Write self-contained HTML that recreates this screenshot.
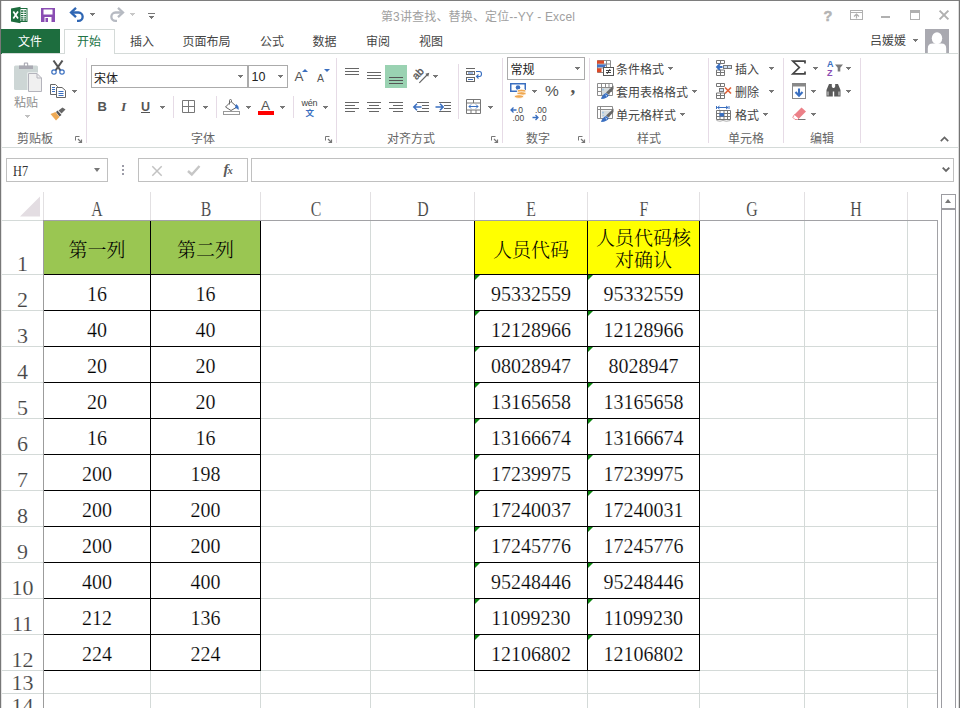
<!DOCTYPE html>
<html lang="zh-CN"><head><meta charset="utf-8"><title>Excel</title>
<style>
*{box-sizing:border-box;margin:0;padding:0}
html,body{width:960px;height:708px;overflow:hidden;background:#fff}
body{position:relative;font-family:"Liberation Sans","Noto Sans CJK SC",sans-serif;font-size:12px;color:#444}
.a{position:absolute}
.t{position:absolute;white-space:nowrap;line-height:16px;height:16px}
.tab{position:absolute;top:34px;height:16px;line-height:16px;font-size:12px;color:#444;white-space:nowrap;transform:translateX(-50%)}
.gl{position:absolute;top:131px;height:16px;line-height:16px;font-size:12px;color:#666;white-space:nowrap;transform:translateX(-50%)}
.gs{position:absolute;top:58px;width:1px;height:85px;background:#e6dbe6}
.ss{position:absolute;width:1px;background:#e6dbe6}
.arr{position:absolute;width:0;height:0;border-left:2.800px solid transparent;border-right:2.800px solid transparent;border-top:3px solid #777;margin-left:.2px}
.rl{position:absolute;font-size:12px;color:#444;white-space:nowrap;line-height:16px;height:16px}
.vl{position:absolute;width:1px;background:#d4dad8}
.hl{position:absolute;height:1px;background:#d4dad8}
.bv{position:absolute;width:1px;background:#000}
.bh{position:absolute;height:1px;background:#000}
.ch{position:absolute;top:196px;height:26px;line-height:26px;font-family:"Liberation Serif","Noto Serif CJK SC",serif;font-size:22px;color:#444;-webkit-text-stroke:.15px #fff;text-align:center;transform:translateX(-50%) scaleX(.72);white-space:nowrap}
.rh{position:absolute;left:1px;width:43px;height:26px;line-height:26px;font-family:"Liberation Serif","Noto Serif CJK SC",serif;font-size:22px;color:#444;-webkit-text-stroke:.15px #fff;text-align:center;white-space:nowrap}
.c{position:absolute;text-align:center;font-family:"Liberation Serif","Noto Serif CJK SC",serif;font-size:20px;color:#000;white-space:nowrap;height:36px;line-height:36px;-webkit-text-stroke:.2px #fff}
.cj{position:absolute;text-align:center;font-family:"Liberation Serif","Noto Serif CJK SC",serif;font-size:19px;font-weight:300;color:#000;white-space:nowrap;line-height:23px}
.tri{position:absolute;width:0;height:0;border-top:5.500px solid #0b840f;border-right:5.500px solid transparent}
svg{position:absolute;overflow:visible}
</style></head>
<body>
<div class="a" style="left:0;top:0;width:960px;height:1px;background:#7e7e7e"></div>
<div class="a" style="left:0;top:0;width:1px;height:708px;background:#777"></div>
<div class="a" style="left:1px;top:1px;width:1px;height:707px;background:#e4e4e4"></div>
<div class="a" style="left:959px;top:0;width:1px;height:708px;background:#747474"></div>
<div class="a" style="left:958px;top:1px;width:1px;height:707px;background:#dcdcdc"></div>
<div class="t" style="left:0;width:956px;text-align:center;top:8.5px;color:#a0a0a0;font-size:12px;letter-spacing:.16px">第3讲查找、替换、定位--YY - Excel</div>
<svg style="left:10px;top:6px" width="18" height="18" viewBox="0 0 18 18">
<rect x="9" y="2.500" width="8" height="13" fill="#fff" stroke="#1d6d3e" stroke-width="1"/>
<path d="M11 5H16M11 7.300H16M11 9.600H16M11 11.900H16M11 14H16" stroke="#1d6d3e" stroke-width="1.300" fill="none"/>
<path d="M13.800 3V15" stroke="#fff" stroke-width=".8"/>
<path d="M1 2.500L10.500 .8V17.200L1 15.500Z" fill="#1d6d3e"/>
<path d="M3.300 5.500L8 12.500M8 5.500L3.300 12.500" stroke="#fff" stroke-width="1.700" fill="none"/>
</svg>
<svg style="left:41px;top:8px" width="14" height="14" viewBox="0 0 14 14">
<path d="M0 0H14V14H0Z" fill="#8a4db3"/>
<rect x="2.500" y="1.500" width="9" height="5" fill="#fff"/>
<rect x="3.500" y="9" width="7" height="5" fill="#fff"/>
<rect x="4.500" y="10" width="2.500" height="4" fill="#8a4db3"/>
</svg>
<svg style="left:69px;top:7px" width="16" height="16" viewBox="0 0 16 16">
<path d="M3 5.500H9.500A4 4 0 0 1 9.500 13.800H8" fill="none" stroke="#2f66b3" stroke-width="2.300"/>
<path d="M7 .8L2 5.500L7 10.200" fill="none" stroke="#2f66b3" stroke-width="2.300"/>
</svg>
<svg style="left:90px;top:13px" width="5" height="3" viewBox="0 0 5 3" shape-rendering="crispEdges"><path d="M0 0H5V1H4V2H3V3H2V2H1V1H0Z" fill="#777"/></svg>
<svg style="left:109px;top:7px" width="16" height="16" viewBox="0 0 16 16">
<path d="M13 5.500H6.500A4 4 0 0 0 6.500 13.800H8" fill="none" stroke="#b6bac2" stroke-width="2.300"/>
<path d="M9 .8L14 5.500L9 10.200" fill="none" stroke="#b6bac2" stroke-width="2.300"/>
</svg>
<svg style="left:130px;top:13px" width="5" height="3" viewBox="0 0 5 3" shape-rendering="crispEdges"><path d="M0 0H5V1H4V2H3V3H2V2H1V1H0Z" fill="#c8c8c8"/></svg>
<div class="a" style="left:148px;top:13px;width:7px;height:1px;background:#777"></div>
<svg style="left:149px;top:16px" width="5" height="3" viewBox="0 0 5 3" shape-rendering="crispEdges"><path d="M0 0H5V1H4V2H3V3H2V2H1V1H0Z" fill="#777"/></svg>
<div class="t" style="left:823px;top:7.500px;font-size:14.500px;font-weight:bold;color:#b4b4b4;-webkit-text-stroke:.5px #b4b4b4;width:10px;text-align:center">?</div>
<svg style="left:850px;top:10px" width="13" height="10" viewBox="0 0 13 10">
<rect x=".5" y=".5" width="12" height="9" fill="none" stroke="#b0b0b0"/>
<path d="M.5 2.5H12.5" stroke="#b0b0b0"/><path d="M6.500 8.500V4M4 6.500L6.500 4L9 6.500" stroke="#b0b0b0" fill="none" stroke-width="1.200"/>
</svg>
<div class="a" style="left:881px;top:16px;width:9px;height:2px;background:#b0b0b0"></div>
<div class="a" style="left:910px;top:10px;width:10px;height:10px;border:1px solid #b0b0b0;border-top-width:3px"></div>
<svg style="left:939px;top:10px" width="10" height="10" viewBox="0 0 10 10">
<path d="M.6 .6L9.400 9.400M9.400 .6L.6 9.400" stroke="#b0b0b0" stroke-width="2"/></svg>
<div class="a" style="left:1px;top:29px;width:59px;height:25px;background:#1d6d3e"></div>
<div class="tab" style="left:30px;color:#fff">文件</div>
<div class="a" style="left:2px;top:53px;width:956px;height:1px;background:#d4dad8"></div>
<div class="a" style="left:64px;top:29px;width:51px;height:25px;background:#fff;border:1px solid #d4dad8;border-bottom:none"></div>
<div class="tab" style="left:89px;color:#217346">开始</div>
<div class="tab" style="left:142px">插入</div>
<div class="tab" style="left:206.5px">页面布局</div>
<div class="tab" style="left:272px">公式</div>
<div class="tab" style="left:324.5px">数据</div>
<div class="tab" style="left:378px">审阅</div>
<div class="tab" style="left:431px">视图</div>
<div class="t" style="left:870px;top:33px;font-size:12px;color:#444">吕媛媛</div>
<svg style="left:913px;top:39px" width="5" height="3" viewBox="0 0 5 3" shape-rendering="crispEdges"><path d="M0 0H5V1H4V2H3V3H2V2H1V1H0Z" fill="#777"/></svg>
<svg style="left:925px;top:29px" width="24" height="24" viewBox="0 0 24 24">
<rect width="24" height="24" fill="#a9a9b0"/>
<ellipse cx="12" cy="9.200" rx="5.200" ry="6" fill="#fff"/>
<path d="M2.800 24V19.500Q2.800 14.600 7.500 14.600H16.500Q21.200 14.600 21.200 19.500V24Z" fill="#fff"/>
</svg>
<div class="gs" style="left:86px"></div>
<div class="gs" style="left:336px"></div>
<div class="gs" style="left:502px"></div>
<div class="gs" style="left:589px"></div>
<div class="gs" style="left:708px"></div>
<div class="gs" style="left:783px"></div>
<div class="gs" style="left:860px"></div>
<svg style="left:14px;top:62px" width="29" height="30" viewBox="0 0 29 30">
<rect x="0" y="3.500" width="24" height="24.500" rx="1.500" fill="#cdd6d5"/>
<path d="M5 7V3.500H9.800V1.500Q9.800 .4 10.800 .4H13.200Q14.200 .4 14.200 1.500V3.500H19V7Z" fill="#a9a9b2"/>
<rect x="10.900" y="1.600" width="2.200" height="1.900" fill="#fff"/>
<path d="M13.500 10.500H23.500L28.500 15.500V30H13.500Z" fill="#fff"/>
<path d="M14.500 11.500H23L27.500 16V29.500H14.500Z" fill="#f0f0f0" stroke="#b4b4bc"/>
<path d="M23 11.500V16H27.500" fill="none" stroke="#b4b4bc"/>
</svg>
<div class="rl" style="left:14px;top:95.3px;color:#8e8e8e;font-size:12px;">粘贴</div>
<svg style="left:25px;top:115px" width="5" height="3" viewBox="0 0 5 3" shape-rendering="crispEdges"><path d="M0 0H5V1H4V2H3V3H2V2H1V1H0Z" fill="#c0c0c0"/></svg>
<svg style="left:51px;top:60px" width="14" height="15" viewBox="0 0 14 15">
<path d="M2.5 .5L9.5 10.5M11.5 .5L4.5 10.5" stroke="#555" stroke-width="2.1" fill="none"/>
<circle cx="3" cy="12" r="2.2" fill="none" stroke="#3a6fc0" stroke-width="1.2"/>
<circle cx="11" cy="12" r="2.2" fill="none" stroke="#3a6fc0" stroke-width="1.2"/>
</svg>
<svg style="left:50px;top:84px" width="16" height="14" viewBox="0 0 16 14">
<path d="M.5 .5H5.5L7.5 2.5V10.5H.5Z" fill="#fff" stroke="#666"/>
<path d="M2 3.5H5M2 5.5H5M2 7.5H5" stroke="#3a6fc0"/>
<path d="M6.500 3.500H12L15.500 6.500V13.500H6.500Z" fill="#fff" stroke="#666"/>
<path d="M8.500 7.500H13.500M8.500 9.500H13.500M8.500 11.500H13.500" stroke="#3a6fc0"/>
</svg>
<svg style="left:72px;top:90px" width="5" height="3" viewBox="0 0 5 3" shape-rendering="crispEdges"><path d="M0 0H5V1H4V2H3V3H2V2H1V1H0Z" fill="#777"/></svg>
<svg style="left:50px;top:107px" width="16" height="14" viewBox="0 0 16 14">
<path d="M12.500 .5L15.500 2.500L11.500 6.500L8.500 3.500Z" fill="#666"/>
<path d="M7.500 3.500L11.500 8L9.500 9.500L6 5Z" fill="#555"/>
<path d="M5.500 5L9.500 10L6 13.500L.5 7Z" fill="#eeaa55"/>
</svg>
<div class="gl" style="left:35px">剪贴板</div>
<svg style="left:75px;top:136px" width="7" height="7" viewBox="0 0 7 7"><path d="M.5 4.5V.5H4.5" fill="none" stroke="#777"/><path d="M3 3L6.5 6.5M6.5 3.5V6.5H3.5" fill="none" stroke="#777" stroke-width="1.2"/></svg>
<div class="a" style="left:91px;top:65px;width:157px;height:23px;border:1px solid #ababab;background:#fff"></div>
<div class="a" style="left:248px;top:65px;width:40px;height:23px;border:1px solid #ababab;background:#fff"></div>
<div class="rl" style="left:94px;top:70.8px;color:#222;font-size:12px;">宋体</div>
<svg style="left:238px;top:75px" width="5" height="3" viewBox="0 0 5 3" shape-rendering="crispEdges"><path d="M0 0H5V1H4V2H3V3H2V2H1V1H0Z" fill="#777"/></svg>
<div class="rl" style="left:251.5px;top:68.7px;color:#222;font-size:12.5px;">10</div>
<svg style="left:278px;top:75px" width="5" height="3" viewBox="0 0 5 3" shape-rendering="crispEdges"><path d="M0 0H5V1H4V2H3V3H2V2H1V1H0Z" fill="#777"/></svg>
<div class="rl" style="left:294.5px;top:68.5px;color:#555;font-size:13.5px;">A</div>
<div class="a" style="left:301.5px;top:69px;width:0;height:0;border-left:3px solid transparent;border-right:3px solid transparent;border-bottom:3px solid #3a6fc0"></div>
<div class="rl" style="left:317px;top:69.5px;color:#555;font-size:10.5px;">A</div>
<div class="a" style="left:323.5px;top:69px;width:0;height:0;border-left:3px solid transparent;border-right:3px solid transparent;border-top:3px solid #3a6fc0"></div>
<div class="rl" style="left:97.5px;top:99px;color:#555;font-size:13px;font-weight:bold">B</div>
<div class="rl" style="left:121px;top:99px;color:#555;font-size:13.5px;font-family:&quot;Liberation Serif&quot;,serif;font-style:italic;font-weight:bold">I</div>
<div class="rl" style="left:141px;top:98.8px;color:#555;font-size:12.5px;font-weight:bold">U</div>
<div class="a" style="left:141px;top:112px;width:9px;height:1px;background:#555"></div>
<svg style="left:160px;top:106px" width="5" height="3" viewBox="0 0 5 3" shape-rendering="crispEdges"><path d="M0 0H5V1H4V2H3V3H2V2H1V1H0Z" fill="#777"/></svg>
<div class="ss" style="left:173px;top:96px;height:22px"></div>
<svg style="left:182px;top:100px" width="13" height="13" viewBox="0 0 13 13"><path d="M.5 .5H12.5V12.5H.5ZM6.500 .5V12.500M.5 6.500H12.500" fill="none" stroke="#777"/></svg>
<svg style="left:203px;top:106px" width="5" height="3" viewBox="0 0 5 3" shape-rendering="crispEdges"><path d="M0 0H5V1H4V2H3V3H2V2H1V1H0Z" fill="#777"/></svg>
<div class="ss" style="left:216px;top:96px;height:22px"></div>
<svg style="left:223px;top:99px" width="18" height="16" viewBox="0 0 18 16">
<path d="M8 2.500L14 8L8 11.500L2.500 8Z" fill="#fff" stroke="#666"/>
<path d="M6.500 5.500V1.500Q6.500 .5 7.500 .5Q8.500 .5 8.500 1.500V3" fill="none" stroke="#666"/>
<path d="M13 5Q16.500 7 15.500 11Q14 9 12 9Z" fill="#3a6fc0"/>
<rect x=".5" y="12.500" width="16" height="3" fill="#fff" stroke="#999"/>
</svg>
<svg style="left:246px;top:106px" width="5" height="3" viewBox="0 0 5 3" shape-rendering="crispEdges"><path d="M0 0H5V1H4V2H3V3H2V2H1V1H0Z" fill="#777"/></svg>
<div class="rl" style="left:261px;top:97.8px;color:#555;font-size:13.5px;">A</div>
<div class="a" style="left:258px;top:111px;width:16px;height:4px;background:#ff0000"></div>
<svg style="left:280px;top:106px" width="5" height="3" viewBox="0 0 5 3" shape-rendering="crispEdges"><path d="M0 0H5V1H4V2H3V3H2V2H1V1H0Z" fill="#777"/></svg>
<div class="ss" style="left:293px;top:96px;height:22px"></div>
<div class="rl" style="left:301.5px;top:94.5px;color:#444;font-size:9px;letter-spacing:-.2px">wén</div>
<div class="rl" style="left:305.5px;top:105.3px;color:#3a6fc0;font-size:8.5px;font-weight:bold">文</div>
<svg style="left:323px;top:106px" width="5" height="3" viewBox="0 0 5 3" shape-rendering="crispEdges"><path d="M0 0H5V1H4V2H3V3H2V2H1V1H0Z" fill="#777"/></svg>
<div class="gl" style="left:203px">字体</div>
<svg style="left:325px;top:136px" width="7" height="7" viewBox="0 0 7 7"><path d="M.5 4.5V.5H4.5" fill="none" stroke="#777"/><path d="M3 3L6.5 6.5M6.5 3.5V6.5H3.5" fill="none" stroke="#777" stroke-width="1.2"/></svg>
<div class="a" style="left:345px;top:68px;width:14px;height:1px;background:#666"></div>
<div class="a" style="left:345px;top:71px;width:14px;height:1px;background:#666"></div>
<div class="a" style="left:345px;top:74px;width:14px;height:1px;background:#666"></div>
<div class="a" style="left:367px;top:72px;width:14px;height:1px;background:#666"></div>
<div class="a" style="left:367px;top:75px;width:14px;height:1px;background:#666"></div>
<div class="a" style="left:367px;top:78px;width:14px;height:1px;background:#666"></div>
<div class="a" style="left:385px;top:65px;width:22px;height:23px;background:#9ad2b2"></div>
<div class="a" style="left:389px;top:77px;width:14px;height:1px;background:#555"></div>
<div class="a" style="left:389px;top:80px;width:14px;height:1px;background:#555"></div>
<div class="a" style="left:389px;top:83px;width:14px;height:1px;background:#555"></div>
<svg style="left:413px;top:67px" width="17" height="17" viewBox="0 0 17 17">
<path d="M6.300 15.800L14.500 7.500" fill="none" stroke="#666" stroke-width="1.200"/>
<path d="M16.300 5.700L12.300 6.800L15.200 9.700Z" fill="#666"/>
<text x="0" y="0" font-family="Liberation Sans,sans-serif" font-size="10.500" fill="#555" stroke="#555" stroke-width=".35" transform="translate(3.600 13.300) rotate(-47)">ab</text>
</svg>
<svg style="left:433px;top:75px" width="5" height="3" viewBox="0 0 5 3" shape-rendering="crispEdges"><path d="M0 0H5V1H4V2H3V3H2V2H1V1H0Z" fill="#777"/></svg>
<div class="a" style="left:345px;top:102px;width:14px;height:1px;background:#666"></div>
<div class="a" style="left:345px;top:105px;width:10px;height:1px;background:#666"></div>
<div class="a" style="left:345px;top:108px;width:14px;height:1px;background:#666"></div>
<div class="a" style="left:345px;top:111px;width:10px;height:1px;background:#666"></div>
<div class="a" style="left:367px;top:102px;width:14px;height:1px;background:#666"></div>
<div class="a" style="left:369px;top:105px;width:10px;height:1px;background:#666"></div>
<div class="a" style="left:367px;top:108px;width:14px;height:1px;background:#666"></div>
<div class="a" style="left:369px;top:111px;width:10px;height:1px;background:#666"></div>
<div class="a" style="left:389px;top:102px;width:14px;height:1px;background:#666"></div>
<div class="a" style="left:393px;top:105px;width:10px;height:1px;background:#666"></div>
<div class="a" style="left:389px;top:108px;width:14px;height:1px;background:#666"></div>
<div class="a" style="left:393px;top:111px;width:10px;height:1px;background:#666"></div>
<div class="a" style="left:417px;top:102px;width:12px;height:1px;background:#666"></div>
<div class="a" style="left:422px;top:105px;width:7px;height:1px;background:#666"></div>
<div class="a" style="left:422px;top:108px;width:7px;height:1px;background:#666"></div>
<div class="a" style="left:417px;top:111px;width:12px;height:1px;background:#666"></div>
<svg style="left:413px;top:102.5px" width="9" height="8" viewBox="0 0 9 8"><path d="M8.500 4H1M4 .8L.8 4L4 7.200" fill="none" stroke="#3a6fc0" stroke-width="1.5"/></svg>
<div class="a" style="left:439px;top:102px;width:12px;height:1px;background:#666"></div>
<div class="a" style="left:444px;top:105px;width:7px;height:1px;background:#666"></div>
<div class="a" style="left:444px;top:108px;width:7px;height:1px;background:#666"></div>
<div class="a" style="left:439px;top:111px;width:12px;height:1px;background:#666"></div>
<svg style="left:434.5px;top:102.5px" width="9" height="8" viewBox="0 0 9 8"><path d="M.5 4H8M5 .8L8.200 4L5 7.200" fill="none" stroke="#3a6fc0" stroke-width="1.500"/></svg>
<div class="ss" style="left:458px;top:64px;height:55px"></div>
<svg style="left:466px;top:68px" width="17" height="15" viewBox="0 0 17 15">
<path d="M0 .5H9" stroke="#666"/>
<rect x=".5" y="3.500" width="8" height="3" fill="#fff" stroke="#666"/>
<rect x=".5" y="9.500" width="8" height="4" fill="#fff" stroke="#666"/>
<path d="M2 11.500H7" stroke="#3a6fc0"/><path d="M2 5H7" stroke="#3a6fc0"/>
<path d="M10 3.500H13.500Q15.500 3.500 15.500 6Q15.500 8.500 13.500 8.500H10.500M12.500 6.500L10.500 8.500L12.500 10.500" fill="none" stroke="#3a6fc0" stroke-width="1.100"/>
</svg>
<svg style="left:466px;top:99px" width="15" height="15" viewBox="0 0 15 15">
<path d="M.5 .5H14.500V14.500H.5ZM.5 4H14.500M.5 11H14.500M7.500 .5V4M5 11V14.500M10 11V14.500" fill="none" stroke="#777"/>
<path d="M3 7.500H12M5 5.500L3 7.500L5 9.500M10 5.500L12 7.500L10 9.500" fill="none" stroke="#3a6fc0"/>
</svg>
<svg style="left:488px;top:106px" width="5" height="3" viewBox="0 0 5 3" shape-rendering="crispEdges"><path d="M0 0H5V1H4V2H3V3H2V2H1V1H0Z" fill="#777"/></svg>
<div class="gl" style="left:411px">对齐方式</div>
<svg style="left:491px;top:136px" width="7" height="7" viewBox="0 0 7 7"><path d="M.5 4.5V.5H4.5" fill="none" stroke="#777"/><path d="M3 3L6.5 6.5M6.5 3.5V6.5H3.5" fill="none" stroke="#777" stroke-width="1.2"/></svg>
<div class="a" style="left:507px;top:57px;width:78px;height:23px;border:1px solid #ababab;background:#fff"></div>
<div class="rl" style="left:510.5px;top:61.8px;color:#222;font-size:12px;">常规</div>
<svg style="left:575px;top:67px" width="5" height="3" viewBox="0 0 5 3" shape-rendering="crispEdges"><path d="M0 0H5V1H4V2H3V3H2V2H1V1H0Z" fill="#777"/></svg>
<svg style="left:510px;top:83px" width="17" height="16" viewBox="0 0 17 16">
<rect x="0" y="0" width="16" height="9" fill="#3a6fc0"/>
<rect x="1.500" y="1.500" width="13" height="6" fill="#fff"/>
<circle cx="8" cy="4.500" r="2.300" fill="#3a6fc0"/>
<ellipse cx="11.500" cy="8" rx="4.500" ry="1.800" fill="#f0a850" stroke="#fff" stroke-width=".8"/>
<ellipse cx="11.500" cy="10.500" rx="4.500" ry="1.800" fill="#f0a850" stroke="#fff" stroke-width=".8"/>
<ellipse cx="9" cy="13.500" rx="4.500" ry="1.800" fill="#f0a850" stroke="#fff" stroke-width=".8"/>
</svg>
<svg style="left:532px;top:90px" width="5" height="3" viewBox="0 0 5 3" shape-rendering="crispEdges"><path d="M0 0H5V1H4V2H3V3H2V2H1V1H0Z" fill="#777"/></svg>
<div class="rl" style="left:545px;top:83.3px;color:#555;font-size:15.5px;">%</div>
<div class="rl" style="left:570.5px;top:78.5px;color:#555;font-size:19px;font-family:&quot;Liberation Serif&quot;,serif;font-weight:bold">,</div>
<svg style="left:510px;top:106px" width="16" height="15" viewBox="0 0 16 15">
<path d="M6.500 4H1M3.500 1.500L1 4L3.500 6.500" fill="none" stroke="#3a6fc0" stroke-width="1.300"/>
<text x="6" y="7" font-family="Liberation Sans,sans-serif" font-size="8.500" fill="#444">.0</text>
<text x="2.500" y="14.500" font-family="Liberation Sans,sans-serif" font-size="8.500" fill="#444">.00</text>
</svg>
<svg style="left:532px;top:106px" width="16" height="15" viewBox="0 0 16 15">
<text x="3" y="7" font-family="Liberation Sans,sans-serif" font-size="8.500" fill="#444">.00</text>
<path d="M.5 11.500H6M3.500 9L6 11.500L3.500 14" fill="none" stroke="#3a6fc0" stroke-width="1.300"/>
<text x="7.500" y="14.500" font-family="Liberation Sans,sans-serif" font-size="8.500" fill="#444">.0</text>
</svg>
<div class="gl" style="left:538px">数字</div>
<svg style="left:578px;top:136px" width="7" height="7" viewBox="0 0 7 7"><path d="M.5 4.5V.5H4.5" fill="none" stroke="#777"/><path d="M3 3L6.5 6.5M6.5 3.5V6.5H3.5" fill="none" stroke="#777" stroke-width="1.2"/></svg>
<svg style="left:597px;top:60px" width="17" height="16" viewBox="0 0 17 16">
<path d="M.5 .5H13.500V12.500H.5ZM9.500 .5V12.500M.5 4H13.500M.5 8H13.500" fill="#fff" stroke="#8c8c8c"/>
<rect x="0" y=".5" width="7" height="3.200" fill="#dc4a28"/>
<path d="M0 4.500H9.500L7.500 7.200H0Z" fill="#4472c4"/>
<rect x="0" y="8.300" width="4.500" height="4" fill="#dc4a28"/>
<rect x="6.500" y="7.500" width="10" height="8" fill="#fff" stroke="#555"/>
<path d="M9 10.500H14M9 12.500H14M13 9L10 14" stroke="#333" stroke-width=".9"/>
</svg>
<div class="rl" style="left:616px;top:61.8px;color:#444;font-size:12px;">条件格式</div>
<svg style="left:668px;top:67px" width="5" height="3" viewBox="0 0 5 3" shape-rendering="crispEdges"><path d="M0 0H5V1H4V2H3V3H2V2H1V1H0Z" fill="#777"/></svg>
<svg style="left:597px;top:83px" width="17" height="16" viewBox="0 0 17 16">
<path d="M.5 .5H15.500V12.500H.5ZM.5 4.500H15.500M.5 8.500H15.500M4.500 .5V12.500M8.500 .5V12.500M12 .5V12.500" fill="#fff" stroke="#8c8c8c"/>
<rect x="5" y="5" width="7" height="7" fill="#d5dbdd"/>
<path d="M5 6.500H7M6 5.500V8" stroke="#9cc3e6" stroke-width=".8"/>
<path d="M16.500 2.500V6L11.500 11.500L9 9.500Z" fill="#686868"/>
<path d="M4 16Q5 11.500 9 10L11.800 12.200Q10.500 15.500 4 16Z" fill="#3a6fc0"/>
<path d="M8.500 12L10 13.200" stroke="#fff" stroke-width=".9"/>
</svg>
<div class="rl" style="left:616px;top:85px;color:#444;font-size:12px;">套用表格格式</div>
<svg style="left:692px;top:90px" width="5" height="3" viewBox="0 0 5 3" shape-rendering="crispEdges"><path d="M0 0H5V1H4V2H3V3H2V2H1V1H0Z" fill="#777"/></svg>
<svg style="left:597px;top:106px" width="17" height="16" viewBox="0 0 17 16">
<path d="M.5 .5H15.500V12.500H.5ZM.5 3.500H15.500M3.500 .5V12.500" fill="#fff" stroke="#8c8c8c"/>
<rect x="4.500" y="4.500" width="8.500" height="7" fill="#d5dbdd"/>
<path d="M5 6.500H7M6 5.500V8M5.500 9.500H7" stroke="#9cc3e6" stroke-width=".8"/>
<path d="M16.500 2.500V6L11.500 11.500L9 9.500Z" fill="#686868"/>
<path d="M4 16Q5 11.500 9 10L11.800 12.200Q10.500 15.500 4 16Z" fill="#3a6fc0"/>
<path d="M8.500 12L10 13.200" stroke="#fff" stroke-width=".9"/>
</svg>
<div class="rl" style="left:616px;top:108.2px;color:#444;font-size:12px;">单元格样式</div>
<svg style="left:680px;top:113px" width="5" height="3" viewBox="0 0 5 3" shape-rendering="crispEdges"><path d="M0 0H5V1H4V2H3V3H2V2H1V1H0Z" fill="#777"/></svg>
<div class="gl" style="left:649px">样式</div>
<svg style="left:716px;top:60px" width="16" height="16" viewBox="0 0 16 16">
<path d="M.5 .5H8.500V3.500H.5ZM4.500 .5V3.500M.5 10V15.500H8.500V10ZM.5 12.500H8.500M4.500 10V15.500" fill="#fff" stroke="#777"/>
<rect x="7.500" y="5.500" width="8" height="3" fill="#cfe0f2" stroke="#777"/>
<path d="M11.500 5.500V8.500" stroke="#777"/>
<path d="M6.500 7H1.500M4 4L1 7L4 10" fill="none" stroke="#3a6fc0" stroke-width="1.800"/>
</svg>
<div class="rl" style="left:735px;top:62px;color:#444;font-size:12px;">插入</div>
<svg style="left:769px;top:67px" width="5" height="3" viewBox="0 0 5 3" shape-rendering="crispEdges"><path d="M0 0H5V1H4V2H3V3H2V2H1V1H0Z" fill="#777"/></svg>
<svg style="left:716px;top:83px" width="16" height="16" viewBox="0 0 16 16">
<path d="M.5 .5H8.500V3.500H.5ZM4.500 .5V3.500M.5 10V15.500H8.500V10ZM.5 12.500H8.500M4.500 10V15.500" fill="#fff" stroke="#777"/>
<rect x="3.500" y="5.500" width="4" height="3" fill="#cfe0f2" stroke="#777"/>
<path d="M9 4.500L15 10.500M15 4.500L9 10.500" fill="none" stroke="#e0643c" stroke-width="1.700"/>
</svg>
<div class="rl" style="left:735px;top:85px;color:#444;font-size:12px;">删除</div>
<svg style="left:769px;top:90px" width="5" height="3" viewBox="0 0 5 3" shape-rendering="crispEdges"><path d="M0 0H5V1H4V2H3V3H2V2H1V1H0Z" fill="#777"/></svg>
<svg style="left:716px;top:106px" width="16" height="16" viewBox="0 0 16 16">
<path d="M1.500 1.500H12M.5 0V3M13 0V3M3.500 0L1.500 1.500L3.500 3M10 0L12 1.500L10 3" fill="none" stroke="#3a6fc0" stroke-width="1"/>
<path d="M.5 4.500H14.500V13.500H.5ZM.5 7.500H14.500M.5 10.500H14.500M4 4.500V13.500M8 4.500V13.500M11.500 4.500V13.500" fill="#fff" stroke="#777"/>
<path d="M.5 14.500Q4 16 7 14.500Q10 16 14.500 14.500" fill="none" stroke="#999" stroke-width=".8"/>
<rect x="3.500" y="7" width="4.500" height="3.500" fill="#3a6fc0"/>
</svg>
<div class="rl" style="left:735px;top:107.8px;color:#444;font-size:12px;">格式</div>
<svg style="left:763px;top:113px" width="5" height="3" viewBox="0 0 5 3" shape-rendering="crispEdges"><path d="M0 0H5V1H4V2H3V3H2V2H1V1H0Z" fill="#777"/></svg>
<div class="gl" style="left:746px">单元格</div>
<svg style="left:791px;top:60px" width="16" height="15" viewBox="0 0 16 15"><path d="M14 3.500V1.200H1.800L8.300 7.500L1.800 13.800H14V11.500" fill="none" stroke="#444" stroke-width="1.700"/></svg>
<svg style="left:813px;top:67px" width="5" height="3" viewBox="0 0 5 3" shape-rendering="crispEdges"><path d="M0 0H5V1H4V2H3V3H2V2H1V1H0Z" fill="#777"/></svg>
<svg style="left:827px;top:60px" width="17" height="17" viewBox="0 0 17 17">
<text x="0" y="7" font-family="Liberation Sans,sans-serif" font-size="9" font-weight="bold" fill="#3a6fc0">A</text>
<text x="0" y="16" font-family="Liberation Sans,sans-serif" font-size="9" font-weight="bold" fill="#8a4db3">Z</text>
<path d="M8 4.500H16L13.300 7.800V11.500H10.700V7.800Z" fill="#7a7a7a"/>
</svg>
<svg style="left:846px;top:67px" width="5" height="3" viewBox="0 0 5 3" shape-rendering="crispEdges"><path d="M0 0H5V1H4V2H3V3H2V2H1V1H0Z" fill="#777"/></svg>
<svg style="left:792px;top:83px" width="15" height="16" viewBox="0 0 15 16">
<rect x=".5" y=".5" width="13" height="15" fill="#fff" stroke="#888"/>
<rect x="0" y="0" width="14" height="3.500" fill="#888"/>
<path d="M7 5.500V12.500M3.500 9L7 12.800L10.500 9" fill="none" stroke="#3a6fc0" stroke-width="2.100"/>
</svg>
<svg style="left:811px;top:90px" width="5" height="3" viewBox="0 0 5 3" shape-rendering="crispEdges"><path d="M0 0H5V1H4V2H3V3H2V2H1V1H0Z" fill="#777"/></svg>
<svg style="left:826px;top:84px" width="15" height="13" viewBox="0 0 15 13">
<path d="M3 0H5.800V2.500L6.800 4V12.500H.5V6Z" fill="#5a5a5a"/>
<path d="M12 0H9.200V2.500L8.200 4V12.500H14.500V6Z" fill="#5a5a5a"/>
<rect x="6" y="4" width="3" height="3.500" fill="#5a5a5a"/>
<path d="M2 7.500V11.500M13 7.500V11.500" stroke="#ddd" stroke-width="1"/>
</svg>
<svg style="left:846px;top:90px" width="5" height="3" viewBox="0 0 5 3" shape-rendering="crispEdges"><path d="M0 0H5V1H4V2H3V3H2V2H1V1H0Z" fill="#777"/></svg>
<svg style="left:792px;top:107px" width="15" height="13" viewBox="0 0 15 13">
<path d="M9.500 .5L14 4.500L7 11.500L2.500 7.500Z" fill="#ec8088"/>
<path d="M2.500 7.500L7 11.500L5.500 12.500H3L.8 10.300Z" fill="#fff" stroke="#e8707a" stroke-width=".8"/>
<path d="M6 12.500H13.500" stroke="#777"/>
</svg>
<svg style="left:811px;top:113px" width="5" height="3" viewBox="0 0 5 3" shape-rendering="crispEdges"><path d="M0 0H5V1H4V2H3V3H2V2H1V1H0Z" fill="#777"/></svg>
<div class="gl" style="left:822px">编辑</div>
<svg style="left:940px;top:136px" width="9" height="6" viewBox="0 0 9 6"><path d="M.8 5.200L4.500 1.500L8.200 5.200" fill="none" stroke="#666" stroke-width="1.700"/></svg>
<div class="a" style="left:2px;top:147px;width:956px;height:1px;background:#d4dad8"></div>
<div class="a" style="left:6px;top:158px;width:102px;height:24px;border:1px solid #c0c0c0;background:#fff"></div>
<div class="t" style="left:12.500px;top:163px;font-family:&quot;Liberation Serif&quot;,serif;font-size:15px;color:#333;transform-origin:0 0;transform:scaleX(.82)">H7</div>
<div class="arr" style="left:94px;top:168px;border-left-width:3.5px;border-right-width:3.5px;border-top-width:4px"></div>
<div class="a" style="left:122px;top:165px;width:2px;height:2px;background:#9c9ca8"></div>
<div class="a" style="left:122px;top:169px;width:2px;height:2px;background:#9c9ca8"></div>
<div class="a" style="left:122px;top:173px;width:2px;height:2px;background:#9c9ca8"></div>
<div class="a" style="left:138px;top:158px;width:110px;height:24px;border:1px solid #c0c0c0;background:#fff"></div>
<svg style="left:152px;top:165.500px" width="10" height="10" viewBox="0 0 10 10"><path d="M.3 .3L9.700 9.700M9.700 .3L.3 9.700" stroke="#c2c2c2" stroke-width="1.500"/></svg>
<svg style="left:187px;top:165px" width="14" height="11" viewBox="0 0 14 11"><path d="M1 6L4.800 9.500L12.500 1" stroke="#c6c6c6" stroke-width="2.400" fill="none"/></svg>
<div class="t" style="left:223.500px;top:161px;font-family:&quot;Liberation Serif&quot;,serif;font-style:italic;font-weight:bold;font-size:15px;color:#5a5a5a">f<span style="font-size:10.500px;margin-left:-1px">x</span></div>
<div class="a" style="left:251px;top:158px;width:703px;height:24px;border:1px solid #c0c0c0;background:#fff"></div>
<svg style="left:942px;top:167px" width="8" height="6" viewBox="0 0 8 6"><path d="M.7 .7L4 4L7.3 .7" stroke="#666" stroke-width="1.8" fill="none"/></svg>
<svg style="left:20px;top:196px" width="21" height="21" viewBox="0 0 21 21"><path d="M20 .5V20.500H0Z" fill="#e3dde2"/></svg>
<div class="vl" style="left:43px;top:192px;height:29px;background:#e2e0e2"></div>
<div class="vl" style="left:150px;top:192px;height:29px;background:#e2e0e2"></div>
<div class="vl" style="left:260px;top:192px;height:29px;background:#e2e0e2"></div>
<div class="vl" style="left:370px;top:192px;height:29px;background:#e2e0e2"></div>
<div class="vl" style="left:474px;top:192px;height:29px;background:#e2e0e2"></div>
<div class="vl" style="left:587px;top:192px;height:29px;background:#e2e0e2"></div>
<div class="vl" style="left:699px;top:192px;height:29px;background:#e2e0e2"></div>
<div class="vl" style="left:804px;top:192px;height:29px;background:#e2e0e2"></div>
<div class="vl" style="left:907px;top:192px;height:29px;background:#e2e0e2"></div>
<div class="ch" style="left:97px">A</div>
<div class="ch" style="left:205.5px">B</div>
<div class="ch" style="left:315.5px">C</div>
<div class="ch" style="left:422.5px">D</div>
<div class="ch" style="left:531px">E</div>
<div class="ch" style="left:643.5px">F</div>
<div class="ch" style="left:752px">G</div>
<div class="ch" style="left:856px">H</div>
<div class="vl" style="left:43px;top:221px;height:487px"></div>
<div class="vl" style="left:150px;top:221px;height:487px"></div>
<div class="vl" style="left:260px;top:221px;height:487px"></div>
<div class="vl" style="left:370px;top:221px;height:487px"></div>
<div class="vl" style="left:474px;top:221px;height:487px"></div>
<div class="vl" style="left:587px;top:221px;height:487px"></div>
<div class="vl" style="left:699px;top:221px;height:487px"></div>
<div class="vl" style="left:804px;top:221px;height:487px"></div>
<div class="vl" style="left:907px;top:221px;height:487px"></div>
<div class="hl" style="left:2px;top:274px;width:936px"></div>
<div class="hl" style="left:2px;top:310px;width:936px"></div>
<div class="hl" style="left:2px;top:346px;width:936px"></div>
<div class="hl" style="left:2px;top:382px;width:936px"></div>
<div class="hl" style="left:2px;top:418px;width:936px"></div>
<div class="hl" style="left:2px;top:454px;width:936px"></div>
<div class="hl" style="left:2px;top:490px;width:936px"></div>
<div class="hl" style="left:2px;top:526px;width:936px"></div>
<div class="hl" style="left:2px;top:562px;width:936px"></div>
<div class="hl" style="left:2px;top:598px;width:936px"></div>
<div class="hl" style="left:2px;top:634px;width:936px"></div>
<div class="hl" style="left:2px;top:670px;width:936px"></div>
<div class="hl" style="left:2px;top:693px;width:936px"></div>
<div class="a" style="left:2px;top:220px;width:42px;height:1px;background:#d4dad8"></div>
<div class="a" style="left:43px;top:220px;width:895px;height:1px;background:#a2a2a6"></div>
<div class="a" style="left:937px;top:220px;width:1px;height:488px;background:#a2a2a6"></div>
<div class="rh" style="top:251px">1</div>
<div class="rh" style="top:287px">2</div>
<div class="rh" style="top:323px">3</div>
<div class="rh" style="top:359px">4</div>
<div class="rh" style="top:395px">5</div>
<div class="rh" style="top:431px">6</div>
<div class="rh" style="top:467px">7</div>
<div class="rh" style="top:503px">8</div>
<div class="rh" style="top:539px">9</div>
<div class="rh" style="top:575px">10</div>
<div class="rh" style="top:611px">11</div>
<div class="rh" style="top:647px">12</div>
<div class="rh" style="top:670px">13</div>
<div class="rh" style="top:693px">14</div>
<div class="a" style="left:44px;top:221px;width:216px;height:53px;background:#9ac652"></div>
<div class="a" style="left:475px;top:221px;width:224px;height:53px;background:#ffff00"></div>
<div class="bv" style="left:150px;top:221px;height:450px"></div>
<div class="bv" style="left:260px;top:221px;height:450px"></div>
<div class="bh" style="left:44px;top:274px;width:217px"></div>
<div class="bh" style="left:44px;top:310px;width:217px"></div>
<div class="bh" style="left:44px;top:346px;width:217px"></div>
<div class="bh" style="left:44px;top:382px;width:217px"></div>
<div class="bh" style="left:44px;top:418px;width:217px"></div>
<div class="bh" style="left:44px;top:454px;width:217px"></div>
<div class="bh" style="left:44px;top:490px;width:217px"></div>
<div class="bh" style="left:44px;top:526px;width:217px"></div>
<div class="bh" style="left:44px;top:562px;width:217px"></div>
<div class="bh" style="left:44px;top:598px;width:217px"></div>
<div class="bh" style="left:44px;top:634px;width:217px"></div>
<div class="bh" style="left:44px;top:670px;width:217px"></div>
<div class="a" style="left:43px;top:220px;width:1px;height:488px;background:#9c9c9c"></div>
<div class="bv" style="left:474px;top:221px;height:450px"></div>
<div class="bv" style="left:587px;top:221px;height:450px"></div>
<div class="bv" style="left:699px;top:221px;height:450px"></div>
<div class="bh" style="left:474px;top:274px;width:226px"></div>
<div class="bh" style="left:474px;top:310px;width:226px"></div>
<div class="bh" style="left:474px;top:346px;width:226px"></div>
<div class="bh" style="left:474px;top:382px;width:226px"></div>
<div class="bh" style="left:474px;top:418px;width:226px"></div>
<div class="bh" style="left:474px;top:454px;width:226px"></div>
<div class="bh" style="left:474px;top:490px;width:226px"></div>
<div class="bh" style="left:474px;top:526px;width:226px"></div>
<div class="bh" style="left:474px;top:562px;width:226px"></div>
<div class="bh" style="left:474px;top:598px;width:226px"></div>
<div class="bh" style="left:474px;top:634px;width:226px"></div>
<div class="bh" style="left:474px;top:670px;width:226px"></div>
<div class="cj" style="left:44px;width:106px;top:239px">第一列</div>
<div class="cj" style="left:151px;width:109px;top:239px">第二列</div>
<div class="cj" style="left:475px;width:112px;top:239px">人员代码</div>
<div class="cj" style="left:588px;width:111px;top:228px;line-height:22px">人员代码核<br>对确认</div>
<div class="c" style="left:44px;width:106px;top:276px">16</div>
<div class="c" style="left:151px;width:109px;top:276px">16</div>
<div class="c" style="left:475px;width:112px;top:276px">95332559</div>
<div class="c" style="left:588px;width:111px;top:276px">95332559</div>
<div class="tri" style="left:475px;top:275px"></div>
<div class="tri" style="left:588px;top:275px"></div>
<div class="c" style="left:44px;width:106px;top:312px">40</div>
<div class="c" style="left:151px;width:109px;top:312px">40</div>
<div class="c" style="left:475px;width:112px;top:312px">12128966</div>
<div class="c" style="left:588px;width:111px;top:312px">12128966</div>
<div class="tri" style="left:475px;top:311px"></div>
<div class="tri" style="left:588px;top:311px"></div>
<div class="c" style="left:44px;width:106px;top:348px">20</div>
<div class="c" style="left:151px;width:109px;top:348px">20</div>
<div class="c" style="left:475px;width:112px;top:348px">08028947</div>
<div class="c" style="left:588px;width:111px;top:348px">8028947</div>
<div class="tri" style="left:475px;top:347px"></div>
<div class="tri" style="left:588px;top:347px"></div>
<div class="c" style="left:44px;width:106px;top:384px">20</div>
<div class="c" style="left:151px;width:109px;top:384px">20</div>
<div class="c" style="left:475px;width:112px;top:384px">13165658</div>
<div class="c" style="left:588px;width:111px;top:384px">13165658</div>
<div class="tri" style="left:475px;top:383px"></div>
<div class="tri" style="left:588px;top:383px"></div>
<div class="c" style="left:44px;width:106px;top:420px">16</div>
<div class="c" style="left:151px;width:109px;top:420px">16</div>
<div class="c" style="left:475px;width:112px;top:420px">13166674</div>
<div class="c" style="left:588px;width:111px;top:420px">13166674</div>
<div class="tri" style="left:475px;top:419px"></div>
<div class="tri" style="left:588px;top:419px"></div>
<div class="c" style="left:44px;width:106px;top:456px">200</div>
<div class="c" style="left:151px;width:109px;top:456px">198</div>
<div class="c" style="left:475px;width:112px;top:456px">17239975</div>
<div class="c" style="left:588px;width:111px;top:456px">17239975</div>
<div class="tri" style="left:475px;top:455px"></div>
<div class="tri" style="left:588px;top:455px"></div>
<div class="c" style="left:44px;width:106px;top:492px">200</div>
<div class="c" style="left:151px;width:109px;top:492px">200</div>
<div class="c" style="left:475px;width:112px;top:492px">17240037</div>
<div class="c" style="left:588px;width:111px;top:492px">17240031</div>
<div class="tri" style="left:475px;top:491px"></div>
<div class="tri" style="left:588px;top:491px"></div>
<div class="c" style="left:44px;width:106px;top:528px">200</div>
<div class="c" style="left:151px;width:109px;top:528px">200</div>
<div class="c" style="left:475px;width:112px;top:528px">17245776</div>
<div class="c" style="left:588px;width:111px;top:528px">17245776</div>
<div class="tri" style="left:475px;top:527px"></div>
<div class="tri" style="left:588px;top:527px"></div>
<div class="c" style="left:44px;width:106px;top:564px">400</div>
<div class="c" style="left:151px;width:109px;top:564px">400</div>
<div class="c" style="left:475px;width:112px;top:564px">95248446</div>
<div class="c" style="left:588px;width:111px;top:564px">95248446</div>
<div class="tri" style="left:475px;top:563px"></div>
<div class="tri" style="left:588px;top:563px"></div>
<div class="c" style="left:44px;width:106px;top:600px">212</div>
<div class="c" style="left:151px;width:109px;top:600px">136</div>
<div class="c" style="left:475px;width:112px;top:600px">11099230</div>
<div class="c" style="left:588px;width:111px;top:600px">11099230</div>
<div class="tri" style="left:475px;top:599px"></div>
<div class="tri" style="left:588px;top:599px"></div>
<div class="c" style="left:44px;width:106px;top:636px">224</div>
<div class="c" style="left:151px;width:109px;top:636px">224</div>
<div class="c" style="left:475px;width:112px;top:636px">12106802</div>
<div class="c" style="left:588px;width:111px;top:636px">12106802</div>
<div class="tri" style="left:475px;top:635px"></div>
<div class="tri" style="left:588px;top:635px"></div>
<div class="a" style="left:941px;top:194px;width:15px;height:15px;border:1px solid #9c9ca1;background:#fff"></div>
<div class="a" style="left:945px;top:199px;width:0;height:0;border-left:3.5px solid transparent;border-right:3.5px solid transparent;border-bottom:4px solid #777"></div>
<div class="a" style="left:941px;top:209px;width:15px;height:510px;border:1px solid #9c9ca1;background:#fff"></div>
</body></html>
